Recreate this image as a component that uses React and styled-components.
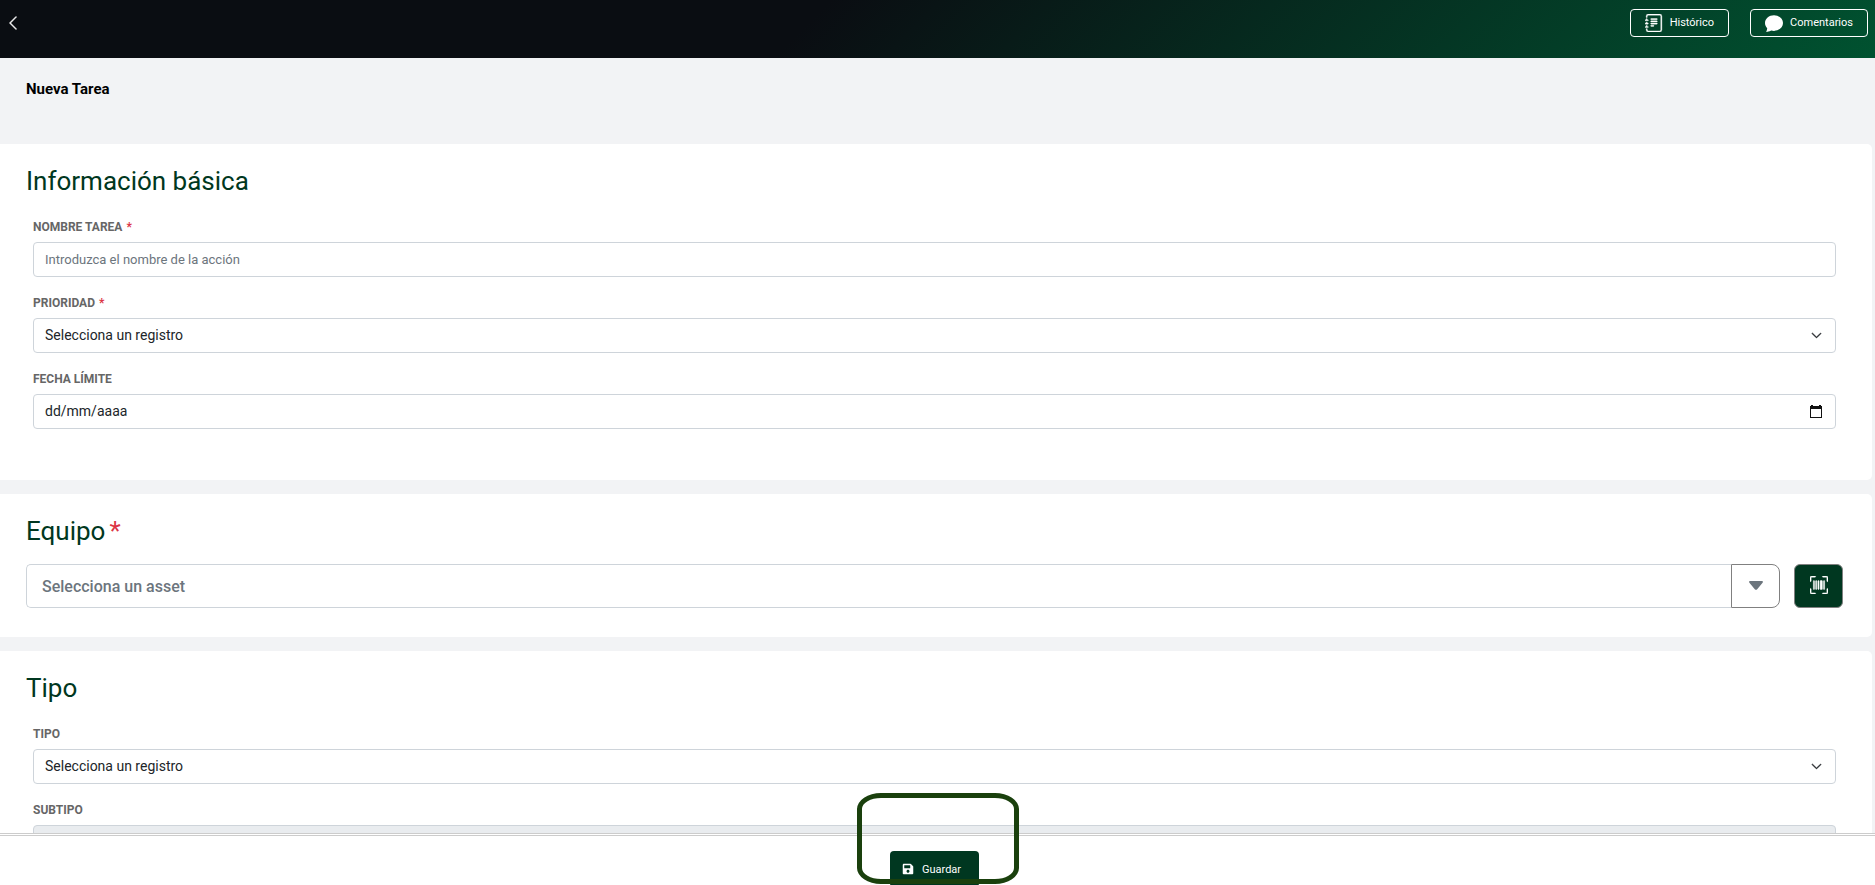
import React from 'react';
import styled, { createGlobalStyle } from 'styled-components';
import { BsChevronLeft, BsJournalText, BsChatFill, BsUpcScan, BsChevronDown } from 'react-icons/bs';
import { FaSave } from 'react-icons/fa';

const GlobalStyle = createGlobalStyle`
  *, *::before, *::after { box-sizing: border-box; }
  body {
    margin: 0;
    background: #f2f3f5;
    color: #212529;
    font-family: Roboto, "Liberation Sans", sans-serif;
  }
  button, input, select { font-family: inherit; }
`;

const Page = styled.div`
  display: flex;
  flex-direction: column;
  height: 100vh;
  overflow: hidden;
`;

const TopBar = styled.header`
  flex: none;
  display: flex;
  align-items: flex-start;
  justify-content: space-between;
  height: 58px;
  padding: 9px 7px 0 5px;
  color: #fff;
  background: linear-gradient(135deg, #0a0d12 43%, #005230 100%);
`;

const BackButton = styled.button`
  display: flex;
  padding: 6px 0;
  border: 0;
  background: none;
  color: inherit;
  cursor: pointer;
`;

const TopActions = styled.div`
  display: flex;
  gap: 21px;
`;

const OutlineButton = styled.button`
  display: flex;
  align-items: center;
  gap: 7px;
  height: 28px;
  padding: 0 14px 1px;
  border: 1px solid #fff;
  border-radius: 4px;
  background: none;
  color: #fff;
  font-size: 11px;
  line-height: 16px;
  cursor: pointer;
`;

const Main = styled.main`
  flex: 1;
  min-height: 0;
  overflow-y: auto;
  padding-right: 3px;
  scrollbar-width: none;
`;

const PageTitle = styled.h1`
  height: 86px;
  margin: 0;
  padding: 21px 26px;
  color: #000;
  font-size: 15px;
  line-height: 20px;
  font-weight: 700;
`;

const Card = styled.section`
  margin-bottom: 14px;
  padding: 21px 26px ${(p) => p.$bottom}px;
  border-radius: 0 5px 5px 0;
  background: #fff;
`;

const CardTitle = styled.h2`
  margin: 0 0 ${(p) => p.$gap}px;
  color: #003720;
  font-size: 26px;
  line-height: 32px;
  font-weight: 400;
`;

const Required = styled.span`
  margin-left: 4px;
  color: #dc3545;
`;

const Fields = styled.div`
  display: flex;
  flex-direction: column;
  gap: 18px;
  padding: 0 10px 0 7px;
`;

const Field = styled.div`
  display: flex;
  flex-direction: column;
  gap: 7px;
`;

const Label = styled.label`
  color: #666;
  font-size: 12px;
  line-height: 16px;
  font-weight: 700;
  text-transform: uppercase;
`;

const Control = styled.div`
  position: relative;
`;

const controlBase = `
  display: block;
  width: 100%;
  height: 35px;
  padding: 0 11px 1px;
  border: 1px solid #ced4da;
  border-radius: 4px;
  background: #fff;
  color: #212529;
  font-size: 14px;
`;

const TextInput = styled.input`
  ${controlBase}
  font-size: 13px;
  &::placeholder { color: #6c757d; opacity: 1; }
`;

const DateInput = styled.input`
  ${controlBase}
  &::placeholder { color: #212529; opacity: 1; }
`;

const Select = styled.select`
  ${controlBase}
  padding-bottom: 2px;
  appearance: none;
  &:disabled { background: #e9ecef; opacity: 1; }
`;

const ControlIcon = styled.span`
  position: absolute;
  inset: 0 14px 0 auto;
  display: flex;
  align-items: center;
  pointer-events: none;
`;

const AssetRow = styled.div`
  display: flex;
  height: 44px;
  padding-right: 3px;
`;

const AssetInput = styled.input`
  flex: 1;
  min-width: 0;
  padding: 0 15px;
  border: 1px solid #ced4da;
  border-right: 0;
  border-radius: 5px 0 0 5px;
  font-size: 16px;
  font-weight: 500;
  &::placeholder { color: #6c757d; opacity: 1; }
`;

const IconButton = styled.button`
  display: flex;
  align-items: center;
  justify-content: center;
  width: 49px;
  padding: 0 0 2px;
  border: 1px solid #808080;
  cursor: pointer;
`;

const DropButton = styled(IconButton)`
  border-radius: 0 8px 8px 0;
  background: #fff;
  color: #6c757d;
`;

const ScanButton = styled(IconButton)`
  margin-left: 14px;
  border-radius: 6px;
  background: #003720;
  color: #fff;
`;

const Footer = styled.footer`
  flex: none;
  position: relative;
  display: flex;
  align-items: flex-start;
  justify-content: center;
  height: 52px;
  padding: 15px 6px 0 0;
  border-top: 3px double #ccc;
  background: #fff;
`;

const SaveButton = styled.button`
  flex: none;
  display: flex;
  align-items: center;
  gap: 8px;
  width: 89px;
  height: 36px;
  padding: 0 12px;
  border: 0;
  border-radius: 4px;
  background: #003720;
  color: #fff;
  font-size: 11px;
  cursor: pointer;
`;

const Highlight = styled.div`
  position: absolute;
  bottom: 1px;
  left: 50%;
  width: 162px;
  height: 91px;
  margin-left: -81px;
  border: 5px solid #1a400d;
  border-radius: 24px / 16px;
  pointer-events: none;
`;

function CalendarIcon() {
  return (
    <svg width="12" height="13" viewBox="0 0 12 13" aria-hidden="true">
      <path d="M1 0h2v1h6V0h2v1h1v12H0V1h1zM1 4v8h10V4z" fill="#111" fillRule="evenodd" />
    </svg>
  );
}

function CaretIcon() {
  return (
    <svg width="14" height="9" viewBox="0 0 14 9" aria-hidden="true">
      <path d="M1.2 0h11.6c1 0 1.5 1 .8 1.7L8 8.4c-.5.6-1.5.6-2 0L.4 1.7C-.3 1 .2 0 1.2 0z" fill="currentColor" />
    </svg>
  );
}

function SelectField({ id, label, required, placeholder, disabled }) {
  return (
    <Field>
      <Label htmlFor={id}>{label}{required && <Required>*</Required>}</Label>
      <Control>
        <Select id={id} disabled={disabled} defaultValue="">
          <option value="">{placeholder}</option>
        </Select>
        {!disabled && <ControlIcon><BsChevronDown size={11} stroke="currentColor" strokeWidth={1} /></ControlIcon>}
      </Control>
    </Field>
  );
}

export default function App() {
  return (
    <Page>
      <GlobalStyle />
      <TopBar>
        <BackButton aria-label="Volver"><BsChevronLeft size={16} strokeWidth={0.5} /></BackButton>
        <TopActions>
          <OutlineButton><BsJournalText size={18} strokeWidth={0.3} />Histórico</OutlineButton>
          <OutlineButton><BsChatFill size={18} />Comentarios</OutlineButton>
        </TopActions>
      </TopBar>
      <Main>
        <PageTitle>Nueva Tarea</PageTitle>
        <Card $bottom={51}>
          <CardTitle $gap={22}>Información básica</CardTitle>
          <Fields>
            <Field>
              <Label htmlFor="nombre">Nombre tarea<Required>*</Required></Label>
              <TextInput id="nombre" placeholder="Introduzca el nombre de la acción" />
            </Field>
            <SelectField id="prioridad" label="Prioridad" required placeholder="Selecciona un registro" />
            <Field>
              <Label htmlFor="fecha">Fecha límite</Label>
              <Control>
                <DateInput id="fecha" placeholder="dd/mm/aaaa" />
                <ControlIcon><CalendarIcon /></ControlIcon>
              </Control>
            </Field>
          </Fields>
        </Card>
        <Card $bottom={29}>
          <CardTitle $gap={17}><label htmlFor="equipo">Equipo</label><Required>*</Required></CardTitle>
          <AssetRow>
            <AssetInput id="equipo" placeholder="Selecciona un asset" />
            <DropButton aria-label="Abrir lista"><CaretIcon /></DropButton>
            <ScanButton aria-label="Escanear"><BsUpcScan size={18} strokeWidth={0.4} /></ScanButton>
          </AssetRow>
        </Card>
        <Card $bottom={50}>
          <CardTitle $gap={22}>Tipo</CardTitle>
          <Fields>
            <SelectField id="tipo" label="Tipo" placeholder="Selecciona un registro" />
            <SelectField id="subtipo" label="Subtipo" placeholder="" disabled />
          </Fields>
        </Card>
      </Main>
      <Footer>
        <SaveButton><FaSave size={12} />Guardar</SaveButton>
        <Highlight />
      </Footer>
    </Page>
  );
}
